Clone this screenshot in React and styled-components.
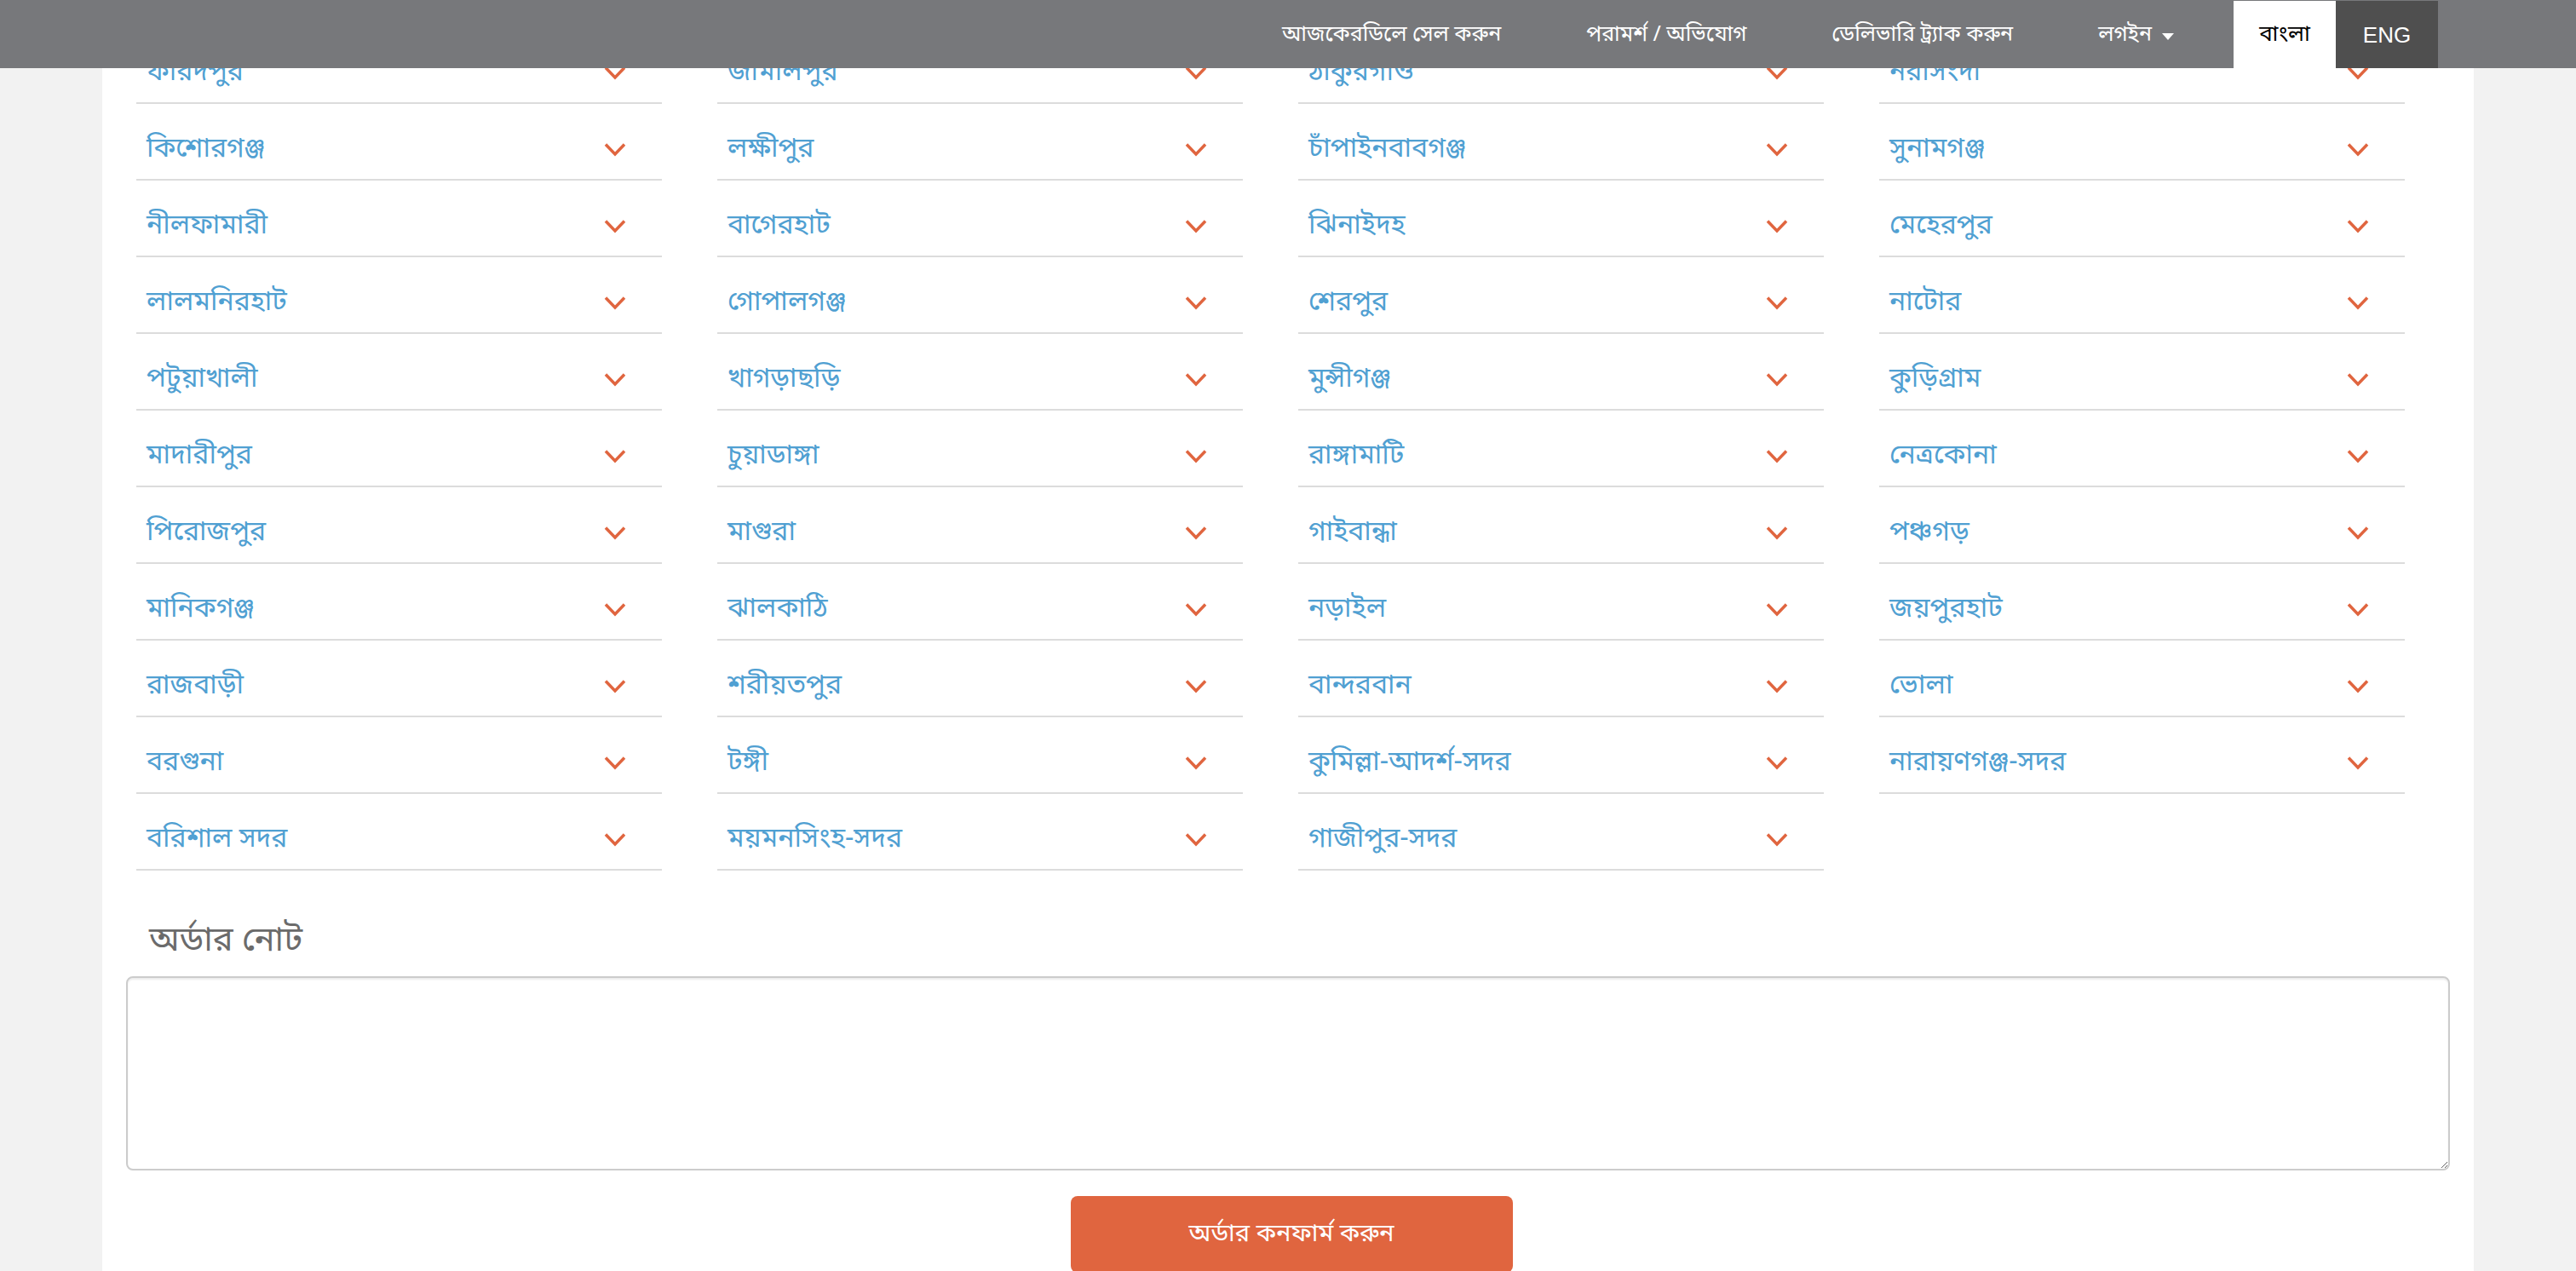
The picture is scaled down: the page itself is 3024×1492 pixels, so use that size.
import React from 'react';
import styled, { createGlobalStyle } from 'styled-components';

const colors = {
  page: '#f2f2f2',
  nav: '#77787b',
  navDark: '#4f4f4f',
  link: '#50a0d2',
  accent: '#e0653f',
  line: '#dcdcdc',
  label: '#6b6b6b',
};

const bangla = `"Noto Sans Bengali", "Lohit Bengali", "Noto Sans", "Liberation Sans", sans-serif`;

const GlobalStyle = createGlobalStyle`
  body {
    margin: 0;
    background: ${colors.page};
    font-family: ${bangla};
  }
  * {
    box-sizing: border-box;
  }
`;

const NavBar = styled.nav`
  position: fixed;
  top: 0;
  left: 0;
  right: 0;
  z-index: 10;
  height: 80px;
  display: flex;
  justify-content: flex-end;
  align-items: stretch;
  padding-right: 162px;
  background: ${colors.nav};
`;

const NavLink = styled.a`
  display: flex;
  align-items: center;
  gap: 12px;
  padding: 2px 50px 0;
  color: #fff;
  font-size: 25px;
  text-decoration: none;
  white-space: nowrap;
`;

const Caret = styled.span`
  width: 0;
  height: 0;
  border-left: 7px solid transparent;
  border-right: 7px solid transparent;
  border-top: 8px solid #fff;
  margin-top: 4px;
`;

const LangGroup = styled.div`
  display: flex;
  margin-left: 20px;
`;

const LangButton = styled.a`
  display: flex;
  align-items: center;
  justify-content: center;
  width: 120px;
  margin-top: 1px;
  padding-top: 2px;
  background: ${p => (p.active ? '#fff' : colors.navDark)};
  color: ${p => (p.active ? '#000' : '#fff')};
  font-family: ${p => (p.latin ? '"Liberation Sans", Arial, sans-serif' : bangla)};
  font-size: 26px;
  text-decoration: none;
`;

const Page = styled.main`
  width: 2784px;
  min-height: 100vh;
  margin: 0 auto;
  padding: 32px 28px 0;
  background: #fff;
`;

const DistrictGrid = styled.div`
  display: grid;
  grid-template-columns: repeat(4, 617px);
  column-gap: 65px;
  padding-left: 12px;
`;

const DistrictRow = styled.div`
  display: flex;
  justify-content: space-between;
  align-items: center;
  height: 90px;
  padding: 20px 42px 0 12px;
  border-bottom: 2px solid ${colors.line};
`;

const DistrictName = styled.span`
  color: ${colors.link};
  font-size: 32px;
  line-height: 1;
`;

const Chevron = styled.svg`
  width: 26px;
  height: 17px;
  margin-bottom: 2px;
`;

const NoteLabel = styled.h4`
  margin: 62px 0 18px 27px;
  color: ${colors.label};
  font-size: 40px;
  font-weight: 400;
  line-height: 1.1;
`;

const NoteBox = styled.textarea`
  display: block;
  width: 100%;
  height: 228px;
  padding: 12px 24px;
  border: 2px solid #cccccc;
  border-radius: 8px;
  box-shadow: inset 0 2px 2px rgba(0, 0, 0, 0.075);
  font-family: ${bangla};
  font-size: 28px;
  outline: none;
`;

const ButtonRow = styled.div`
  display: flex;
  justify-content: center;
  padding-top: 30px;
  padding-left: 8px;
`;

const ConfirmButton = styled.button`
  width: 519px;
  height: 90px;
  border: none;
  border-radius: 8px;
  background: ${colors.accent};
  color: #fff;
  font-family: ${bangla};
  font-size: 29px;
  cursor: pointer;
`;

const districts = [
  'ফরিদপুর', 'জামালপুর', 'ঠাকুরগাঁও', 'নরসিংদী',
  'কিশোরগঞ্জ', 'লক্ষীপুর', 'চাঁপাইনবাবগঞ্জ', 'সুনামগঞ্জ',
  'নীলফামারী', 'বাগেরহাট', 'ঝিনাইদহ', 'মেহেরপুর',
  'লালমনিরহাট', 'গোপালগঞ্জ', 'শেরপুর', 'নাটোর',
  'পটুয়াখালী', 'খাগড়াছড়ি', 'মুন্সীগঞ্জ', 'কুড়িগ্রাম',
  'মাদারীপুর', 'চুয়াডাঙ্গা', 'রাঙ্গামাটি', 'নেত্রকোনা',
  'পিরোজপুর', 'মাগুরা', 'গাইবান্ধা', 'পঞ্চগড়',
  'মানিকগঞ্জ', 'ঝালকাঠি', 'নড়াইল', 'জয়পুরহাট',
  'রাজবাড়ী', 'শরীয়তপুর', 'বান্দরবান', 'ভোলা',
  'বরগুনা', 'টঙ্গী', 'কুমিল্লা-আদর্শ-সদর', 'নারায়ণগঞ্জ-সদর',
  'বরিশাল সদর', 'ময়মনসিংহ-সদর', 'গাজীপুর-সদর',
];

const navLinks = ['আজকেরডিলে সেল করুন', 'পরামর্শ / অভিযোগ', 'ডেলিভারি ট্র্যাক করুন'];

function District({ name }) {
  return (
    <DistrictRow>
      <DistrictName>{name}</DistrictName>
      <Chevron viewBox="0 0 26 17">
        <polyline points="2,2.5 13,14 24,2.5" fill="none" stroke={colors.accent} strokeWidth="3.5" />
      </Chevron>
    </DistrictRow>
  );
}

export default function App() {
  return (
    <>
      <GlobalStyle />
      <NavBar>
        {navLinks.map(link => (
          <NavLink key={link} href="#">{link}</NavLink>
        ))}
        <NavLink href="#">লগইন <Caret /></NavLink>
        <LangGroup>
          <LangButton href="#" active>বাংলা</LangButton>
          <LangButton href="#" latin>ENG</LangButton>
        </LangGroup>
      </NavBar>
      <Page>
        <DistrictGrid>
          {districts.map(d => (
            <District key={d} name={d} />
          ))}
        </DistrictGrid>
        <NoteLabel>অর্ডার নোট</NoteLabel>
        <NoteBox />
        <ButtonRow>
          <ConfirmButton>অর্ডার কনফার্ম করুন</ConfirmButton>
        </ButtonRow>
      </Page>
    </>
  );
}
